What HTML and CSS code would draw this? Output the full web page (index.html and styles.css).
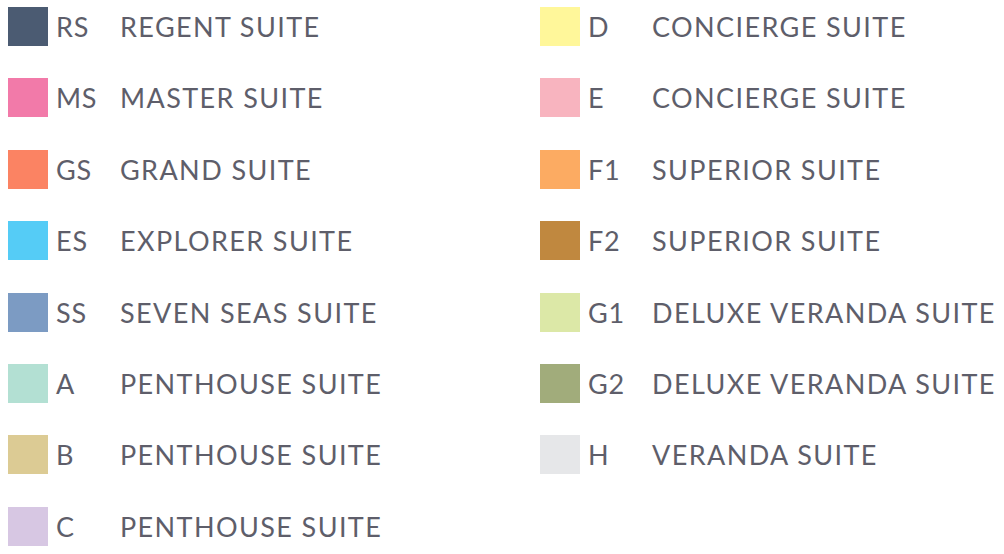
FILE: index.html
```html
<!DOCTYPE html>
<html>
<head>
<meta charset="utf-8">
<link rel="stylesheet" href="styles.css">
</head>
<body>
<div class="legend">
  <div class="col">
    <div class="item"><span class="sw rs"></span><span class="code">RS</span><span class="name">REGENT SUITE</span></div>
    <div class="item"><span class="sw ms"></span><span class="code">MS</span><span class="name">MASTER SUITE</span></div>
    <div class="item"><span class="sw gs"></span><span class="code">GS</span><span class="name">GRAND SUITE</span></div>
    <div class="item"><span class="sw es"></span><span class="code">ES</span><span class="name">EXPLORER SUITE</span></div>
    <div class="item"><span class="sw ss"></span><span class="code">SS</span><span class="name">SEVEN SEAS SUITE</span></div>
    <div class="item"><span class="sw a"></span><span class="code">A</span><span class="name">PENTHOUSE SUITE</span></div>
    <div class="item"><span class="sw b"></span><span class="code">B</span><span class="name">PENTHOUSE SUITE</span></div>
    <div class="item"><span class="sw c"></span><span class="code">C</span><span class="name">PENTHOUSE SUITE</span></div>
  </div>
  <div class="col">
    <div class="item"><span class="sw d"></span><span class="code">D</span><span class="name">CONCIERGE SUITE</span></div>
    <div class="item"><span class="sw e"></span><span class="code">E</span><span class="name">CONCIERGE SUITE</span></div>
    <div class="item"><span class="sw f1"></span><span class="code">F1</span><span class="name">SUPERIOR SUITE</span></div>
    <div class="item"><span class="sw f2"></span><span class="code">F2</span><span class="name">SUPERIOR SUITE</span></div>
    <div class="item"><span class="sw g1"></span><span class="code">G1</span><span class="name">DELUXE VERANDA SUITE</span></div>
    <div class="item"><span class="sw g2"></span><span class="code">G2</span><span class="name">DELUXE VERANDA SUITE</span></div>
    <div class="item"><span class="sw h"></span><span class="code">H</span><span class="name">VERANDA SUITE</span></div>
  </div>
</div>
</body>
</html>
```
FILE: styles.css
```css
html, body {
  margin: 0;
  padding: 0;
  background: #ffffff;
}
body {
  font-family: "Lato", "Open Sans", sans-serif;
  color: #5e5e6a;
  overflow: hidden;
}
.legend {
  display: flex;
  padding: 7px 0 0 8px;
}
.col {
  display: flex;
  flex-direction: column;
  gap: 32.4px;
}
.col:first-child {
  width: 532px;
}
.item {
  display: flex;
  align-items: center;
  height: 39px;
}
.sw {
  width: 40px;
  height: 39px;
  flex: none;
}
.code {
  width: 72px;
  padding-left: 8px;
  box-sizing: border-box;
  font-size: 27px;
  line-height: 1;
  letter-spacing: 0.8px;
  flex: none;
}
.name {
  font-size: 27px;
  line-height: 1;
  white-space: nowrap;
  letter-spacing: 1.4px;
}
.rs { background: #4b5b72; }
.ms { background: #f27aa9; }
.gs { background: #fb8363; }
.es { background: #55ccf6; }
.ss { background: #7c9bc3; }
.a { background: #b3e0d3; }
.b { background: #dccb94; }
.c { background: #d7c7e3; }
.d { background: #fff79a; }
.e { background: #f8b4bf; }
.f1 { background: #fcab62; }
.f2 { background: #c0883f; }
.g1 { background: #dce8a7; }
.g2 { background: #a1ac7b; }
.h { background: #e6e7e9; }
```
